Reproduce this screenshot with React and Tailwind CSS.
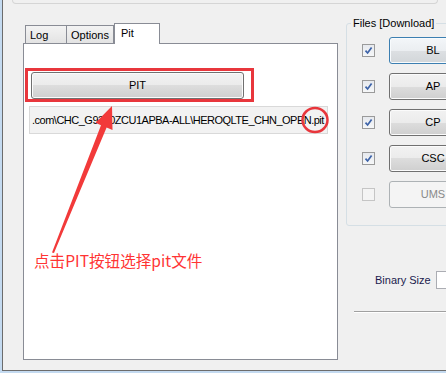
function Btn({ children, variant = "normal", className = "" }) {
  const base =
    "flex items-center justify-center rounded-[3px] border text-[11px] leading-none shrink-0";
  const v =
    variant === "blue"
      ? "border-[#3c7fb1] bg-[linear-gradient(#f3f6f9_0%,#ebeef1_50%,#dde0e3_50%,#d2d6d9_100%)] shadow-[inset_0_0_0_1px_#f8fbfd] text-black"
      : variant === "disabled"
      ? "border-[#adb2b5] bg-[#f4f4f4] text-[#8a8a8a]"
      : "border-[#707070] bg-[linear-gradient(#f2f2f2_0%,#ebebeb_50%,#dddddd_50%,#cfcfcf_100%)] shadow-[inset_0_0_0_1px_#fbfbfb] text-black";
  return <div className={`${base} ${v} ${className}`}>{children}</div>;
}

function Check({ checked }) {
  return checked ? (
    <div className="w-[13px] h-[13px] shrink-0 border border-[#9a9a9a] bg-[linear-gradient(#e6e9ee,#f6f7f8)] flex items-center justify-center">
      <svg width="9" height="9" viewBox="0 0 9 9">
        <path d="M1.5 4.6 L3.6 7 L7.6 1.4" fill="none" stroke="#3d63a8" strokeWidth="1.7" />
      </svg>
    </div>
  ) : (
    <div className="w-[13px] h-[13px] shrink-0 border border-[#c5c5c5] bg-[#f4f4f4]" />
  );
}

export default function App() {
  const rows = [
    { label: "BL", checked: true, variant: "blue" },
    { label: "AP", checked: true, variant: "normal" },
    { label: "CP", checked: true, variant: "normal" },
    { label: "CSC", checked: true, variant: "normal" },
    { label: "UMS", checked: false, variant: "disabled" },
  ];
  return (
    <div className="relative w-[446px] h-[373px] overflow-hidden bg-[#c4daf0] font-['Liberation_Sans',Arial,sans-serif] text-[11px] text-black">
      <div className="ml-[2px] h-[371px] border-l border-b border-[#6c6c6c] bg-[#f0f0f0] flex flex-col overflow-hidden">
        {/* top stub of upper group */}
        <div className="ml-[9px] w-[426px] h-[4px] shrink-0 border-x border-b border-[#d5d5d5] rounded-b-[4px]" />

        <div className="flex items-start mt-[13px]">
          {/* Tab control */}
          <div className="ml-[20px] mt-[6px] w-[315px] shrink-0 flex flex-col">
            <div className="h-[20px] flex items-end pl-[2px]">
              <div className="w-[42px] h-[18px] border-x border-t border-[#898c95] bg-[linear-gradient(#f3f3f3,#e3e3e3)] pl-[4px] pt-[3px] leading-[13px]">
                Log
              </div>
              <div className="w-[47px] h-[18px] border-r border-t border-[#898c95] bg-[linear-gradient(#f3f3f3,#e3e3e3)] pl-[4px] pt-[3px] leading-[13px]">
                Options
              </div>
              <div className="relative z-10 -mb-px w-[46px] h-[21px] border-x border-t border-[#898c95] bg-white pl-[6px] pt-[3px] leading-[13px]">
                Pit
              </div>
            </div>
            <div className="h-[317px] border border-[#898c95] bg-white flex flex-col">
              <Btn className="ml-[7px] mt-[28px] w-[213px] h-[27px]">PIT</Btn>
              <div className="ml-[5px] mt-[7px] w-[299px] h-[28px] border border-[#d9d9d9] bg-[#f2f2f2] flex items-center pl-[2px] overflow-hidden whitespace-nowrap tracking-[-0.5px]">
                .com\CHC_G9300ZCU1APBA-ALL\HEROQLTE_CHN_OPEN.pit
              </div>
              <div className="ml-[10px] mt-[117px] text-[15.6px] leading-[18px] text-[#ff3434] font-['Noto_Sans_CJK_SC',sans-serif] whitespace-nowrap">
                点击PIT按钮选择pit文件
              </div>
            </div>
          </div>

          {/* Right column */}
          <div className="ml-[8px] w-[130px] shrink-0 flex flex-col">
            <fieldset className="h-[209px] w-[130px] border border-[#d5dfe5] rounded-[3px] pt-[7px] flex flex-col gap-[9px]">
              <legend className="ml-[4px] px-[2px] leading-[13px] text-black">Files [Download]</legend>
              {rows.map((r) => (
                <div key={r.label} className="flex items-center h-[27px] pl-[15px] gap-[14px]">
                  <Check checked={r.checked} />
                  <Btn variant={r.variant} className="w-[88px] h-[27px]">
                    {r.label}
                  </Btn>
                </div>
              ))}
            </fieldset>
            <div className="mt-[45px] h-[18px] flex items-center pl-[29px] gap-[5px]">
              <span className="text-[#1b1b4e] whitespace-nowrap">Binary Size</span>
              <div className="w-[40px] h-[18px] shrink-0 border border-[#abadb3] bg-white" />
            </div>
            <div className="ml-[8px] mt-[22px] h-[2px] border-t border-[#a0a0a0] border-b border-b-white" />
          </div>
        </div>
      </div>

      {/* annotations */}
      <svg className="absolute left-0 top-0 pointer-events-none" width="446" height="373" viewBox="0 0 446 373">
        <rect x="26.5" y="69.5" width="226" height="31" fill="none" stroke="#e8363c" strokeWidth="3" />
        <ellipse cx="315" cy="120" rx="12.5" ry="12" fill="none" stroke="#e8363c" strokeWidth="2.5" />
        <polygon
          points="112,106 112.5,130 106.6,127.5 54,253 52,252.5 101,125.3 95.5,122.8"
          fill="#f23a3a"
        />
      </svg>
    </div>
  );
}
